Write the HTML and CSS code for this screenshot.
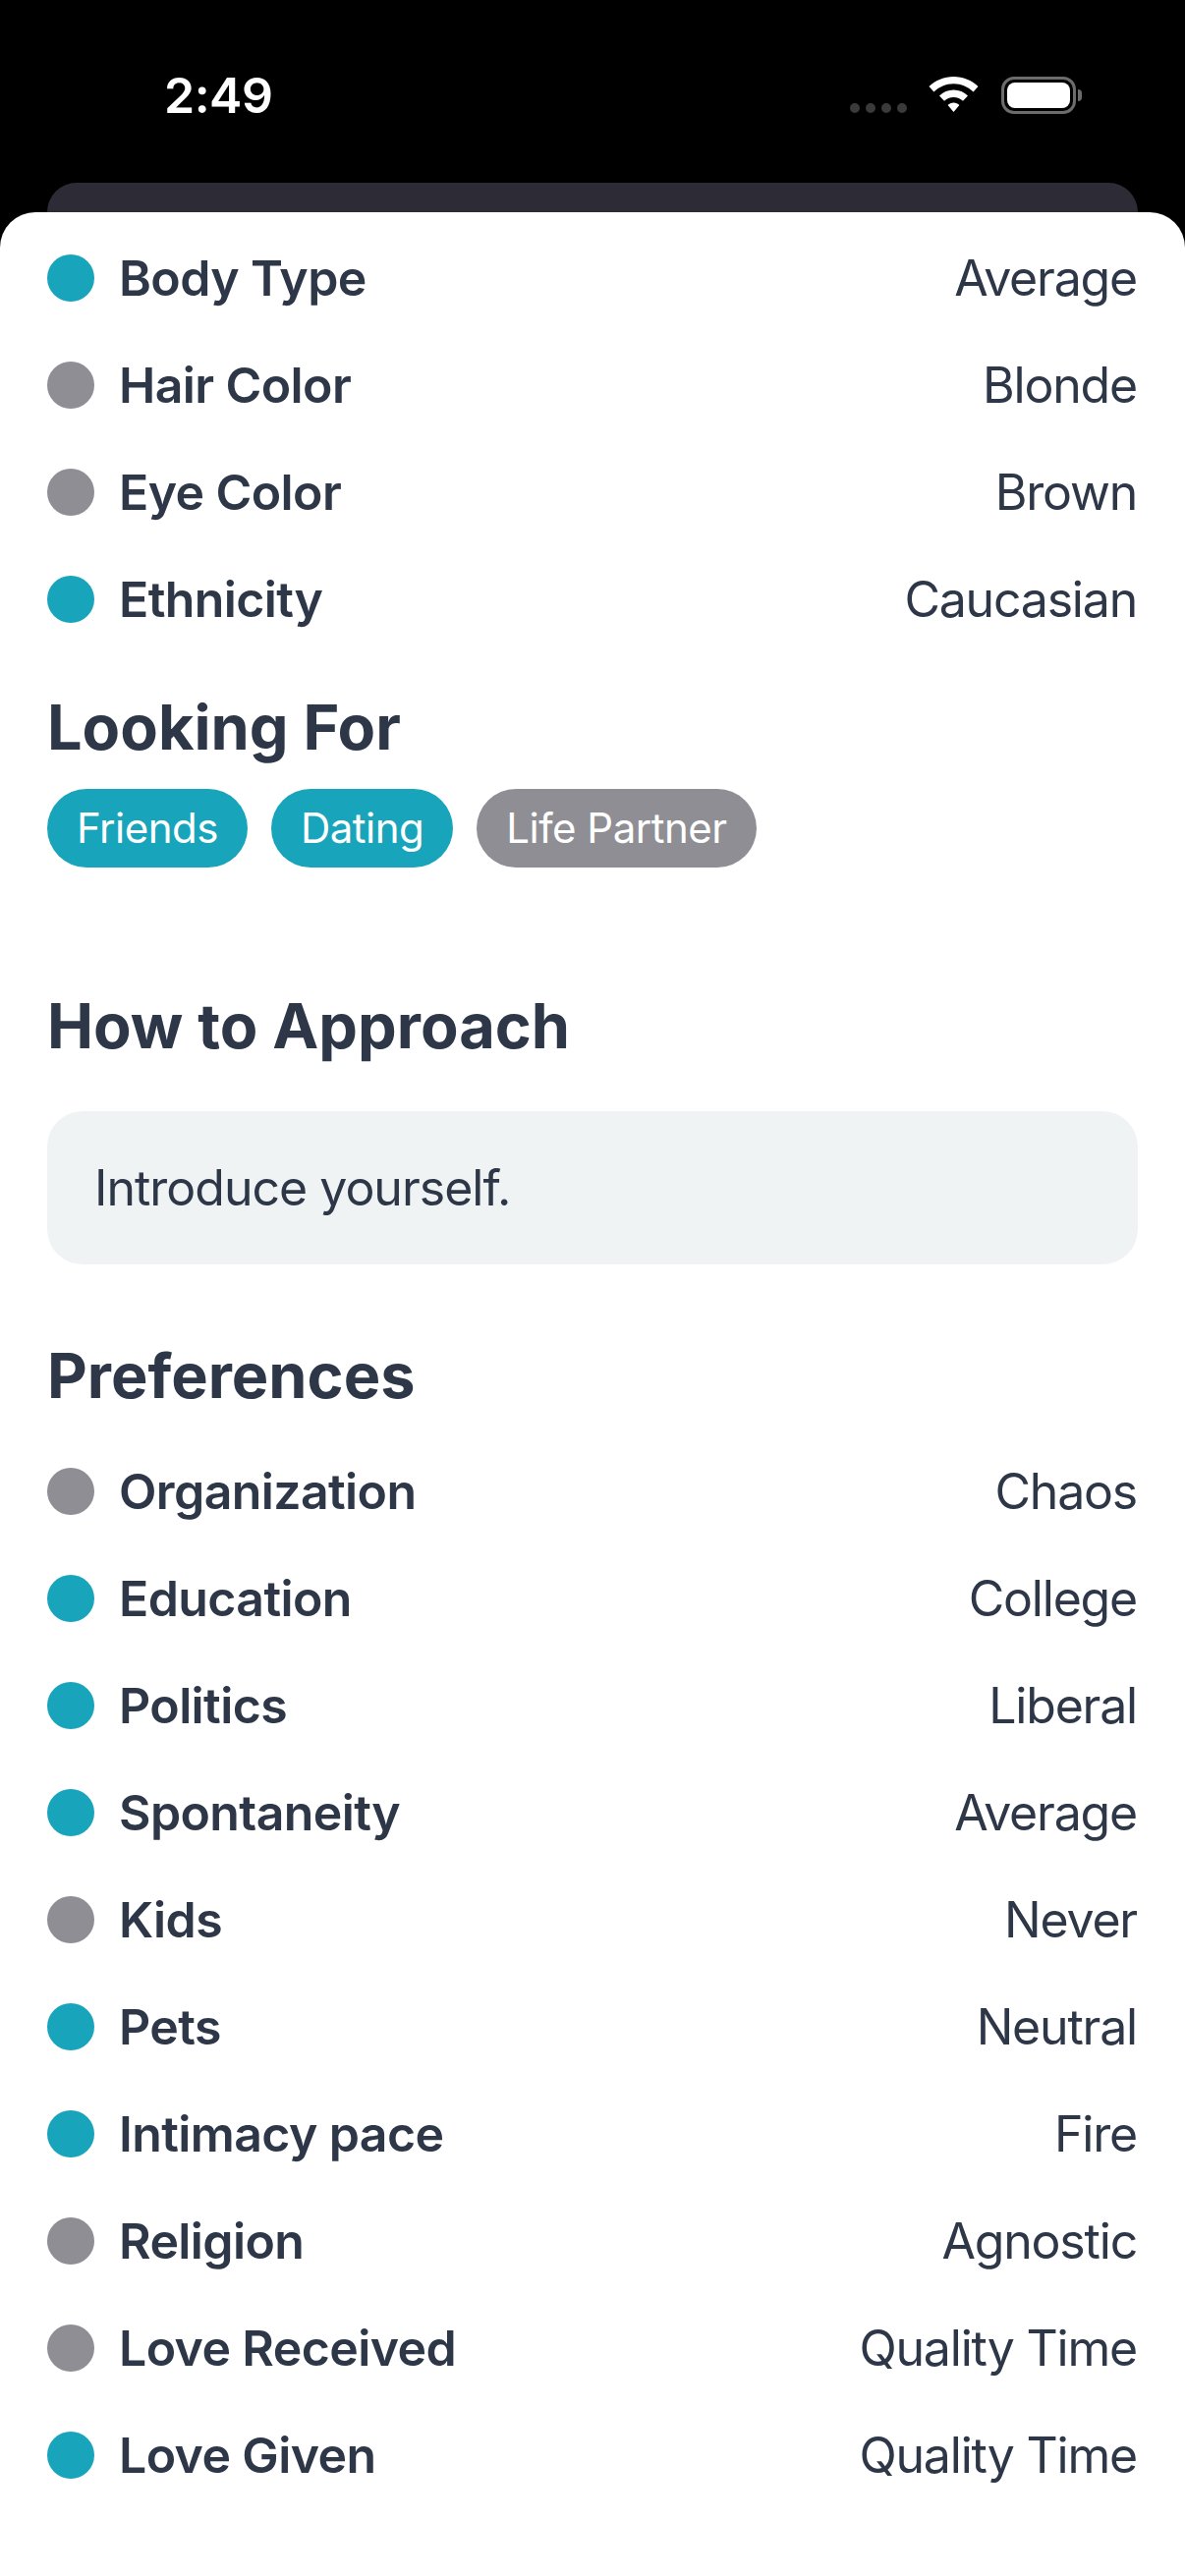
FILE: index.html
```html
<!DOCTYPE html>
<html lang="en">
<head>
<meta charset="utf-8">
<title>Profile</title>
<link rel="stylesheet" href="styles.css">
</head>
<body>
<div class="screen">
  <header class="status">
    <span class="time">2:49</span>
    <div class="status-icons">
      <div class="signal"><i></i><i></i><i></i><i></i></div>
      <svg class="wifi" width="51" height="37" viewBox="0 0 51 37"><path d="M25.500 0C35 0 44 3.800 50.500 10L45.600 15.500C40.300 10.500 33.200 7.300 25.500 7.300C17.800 7.300 10.700 10.500 5.400 15.500L.5 10C7 3.800 16 0 25.500 0Z M25.500 13.500C31 13.500 36.200 15.700 40 19.400L35 24.800C32.500 22.400 29.200 21 25.500 21C21.800 21 18.500 22.400 16 24.800L11 19.400C14.800 15.700 20 13.500 25.500 13.500Z M25.500 26.500C27.800 26.500 29.900 27.400 31.400 28.900L25.500 36L19.600 28.900C21.100 27.400 23.200 26.500 25.500 26.500Z" fill="#fff"/></svg>
      <div class="battery"><div class="battery-body"><div class="battery-fill"></div></div><div class="battery-cap"></div></div>
    </div>
  </header>
  <div class="backcard"></div>
  <main class="sheet">
    <section class="rows">
      <div class="row"><span class="dot on"></span><span class="label">Body Type</span><span class="value">Average</span></div>
      <div class="row"><span class="dot"></span><span class="label">Hair Color</span><span class="value">Blonde</span></div>
      <div class="row"><span class="dot"></span><span class="label">Eye Color</span><span class="value">Brown</span></div>
      <div class="row"><span class="dot on"></span><span class="label">Ethnicity</span><span class="value">Caucasian</span></div>
    </section>
    <h2 class="title looking">Looking For</h2>
    <div class="chips">
      <span class="chip on">Friends</span>
      <span class="chip on">Dating</span>
      <span class="chip">Life Partner</span>
    </div>
    <h2 class="title approach">How to Approach</h2>
    <div class="note">Introduce yourself.</div>
    <h2 class="title prefs">Preferences</h2>
    <section class="rows">
      <div class="row"><span class="dot"></span><span class="label">Organization</span><span class="value">Chaos</span></div>
      <div class="row"><span class="dot on"></span><span class="label">Education</span><span class="value">College</span></div>
      <div class="row"><span class="dot on"></span><span class="label">Politics</span><span class="value">Liberal</span></div>
      <div class="row"><span class="dot on"></span><span class="label">Spontaneity</span><span class="value">Average</span></div>
      <div class="row"><span class="dot"></span><span class="label">Kids</span><span class="value">Never</span></div>
      <div class="row"><span class="dot on"></span><span class="label">Pets</span><span class="value">Neutral</span></div>
      <div class="row"><span class="dot on"></span><span class="label">Intimacy pace</span><span class="value">Fire</span></div>
      <div class="row"><span class="dot"></span><span class="label">Religion</span><span class="value">Agnostic</span></div>
      <div class="row"><span class="dot"></span><span class="label">Love Received</span><span class="value">Quality Time</span></div>
      <div class="row"><span class="dot on"></span><span class="label">Love Given</span><span class="value">Quality Time</span></div>
    </section>
  </main>
</div>
</body>
</html>
```
FILE: styles.css
```css
* { box-sizing: border-box; }
html, body { margin: 0; padding: 0; }
body { background: #000; font-family: Inter, "Liberation Sans", sans-serif; color: #2d3748; }
.screen { width: 1206px; height: 2622px; overflow: hidden; background: #000; display: flex; flex-direction: column; }
.status { height: 186px; flex: none; display: flex; justify-content: space-between; align-items: flex-start; padding: 65px 105px 0 167px; }
.time { color: #fff; font-size: 50px; line-height: 64px; font-weight: 600; letter-spacing: -0.5px; }
.status-icons { display: flex; align-items: flex-start; margin-top: 13px; }
.signal { display: flex; gap: 6px; margin-top: 27px; margin-right: 22px; }
.signal i { width: 10px; height: 10px; border-radius: 50%; background: #3a3a3a; display: block; }
.wifi { margin-right: 23px; }
.battery { display: flex; align-items: center; height: 38px; }
.battery-body { width: 76px; height: 38px; border: 3px solid #6c6c6c; border-radius: 13px; padding: 3px; }
.battery-fill { width: 100%; height: 100%; background: #fff; border-radius: 8px; }
.battery-cap { width: 4px; height: 12px; background: #6c6c6c; border-radius: 0 4px 4px 0; margin-left: 2px; }
.backcard { flex: none; height: 60px; margin: 0 48px -30px; background: #2d2c36; border-radius: 30px 30px 0 0; }
.sheet { flex: 1; background: #fff; border-radius: 36px 36px 0 0; padding: 12px 48px 0; position: relative; }
.rows { display: flex; flex-direction: column; }
.row { display: flex; align-items: center; height: 109px; }
.dot { width: 48px; height: 48px; border-radius: 50%; background: #8f8e94; flex: none; margin-right: 25px; }
.dot.on { background: #18a4ba; }
.label { font-size: 50px; font-weight: 600; flex: 1; letter-spacing: -0.6px; }
.value { font-size: 50px; font-weight: 400; letter-spacing: -1.2px; margin-right: 1px; }
.title { margin: 0; font-size: 63px; line-height: 72px; font-weight: 700; letter-spacing: 0; }
.looking { margin-top: 40px; }
.chips { display: flex; gap: 24px; margin-top: 27px; }
.chip { height: 80px; padding: 0 30px; border-radius: 40px; background: #8f8e94; color: #fff; font-size: 42px; line-height: 80px; letter-spacing: -0.5px; }
.chip.on { background: #18a4ba; }
.approach { margin-top: 125px; }
.note { margin-top: 51px; height: 156px; border-radius: 36px; background: #f0f3f4; padding: 0 48px; font-size: 50px; line-height: 156px; letter-spacing: -1px; }
.prefs { margin-top: 77px; margin-bottom: 27px; }
```
